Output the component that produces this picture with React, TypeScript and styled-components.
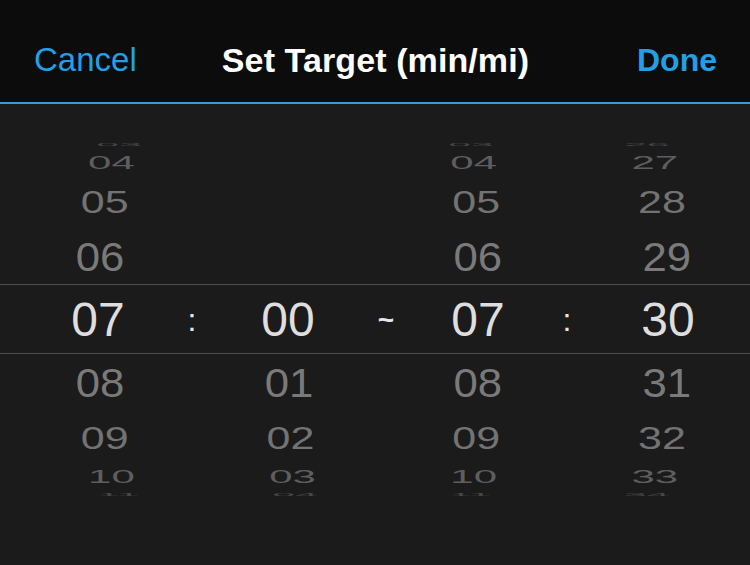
import React, { FC } from 'react'
import styled, { createGlobalStyle } from 'styled-components'

const GlobalStyle = createGlobalStyle`
  html, body {
    margin: 0;
    padding: 0;
    background-color: #1b1b1b;
  }
`

const Screen = styled.div`
  width: 750px;
  height: 565px;
  display: flex;
  flex-direction: column;
  background-color: #1b1b1b;
  overflow: hidden;
  font-family: 'Liberation Sans', Arial, sans-serif;
`

const Header = styled.header`
  height: 84px;
  padding: 18px 33px 0 34px;
  display: grid;
  grid-template-columns: 1fr auto 1fr;
  align-items: center;
  background-color: #0c0c0c;
  border-bottom: 2px solid #3a9bd6;
`

const HeaderButton = styled.span<{ $bold?: boolean; $align: 'left' | 'right' }>`
  color: #22a0e6;
  font-size: ${(p) => (p.$bold ? 32 : 33)}px;
  font-weight: ${(p) => (p.$bold ? 700 : 400)};
  justify-self: ${(p) => (p.$align === 'left' ? 'start' : 'end')};
  cursor: pointer;
`

const Title = styled.h1`
  margin: 0;
  color: #ffffff;
  font-size: 34px;
  font-weight: 700;
  letter-spacing: 0.1px;
`

const Wheel = styled.div`
  position: relative;
  height: 432px;
  display: grid;
  grid-template-columns: 38px 120px 68px 124px 72px 112px 66px 136px 14px;
`

const Band = styled.div`
  position: absolute;
  left: 0;
  right: 0;
  top: 180px;
  height: 68px;
  border-top: 1px solid #4d4d4d;
  border-bottom: 1px solid #4d4d4d;
  pointer-events: none;
`

const Column = styled.div`
  display: flex;
  flex-direction: column;
  justify-content: center;
  align-items: center;
`

const Item = styled.div<{ $selected?: boolean }>`
  display: flex;
  align-items: center;
  justify-content: center;
  width: 100%;
  white-space: nowrap;
  font-size: ${(p) => (p.$selected ? 48 : 44)}px;
  overflow: visible;
`

const Label = styled.span`
  display: block;
  line-height: 1;
`

const Separator = styled.div<{ $size: number; $bold?: boolean }>`
  display: flex;
  align-items: center;
  justify-content: center;
  color: #e6e6e6;
  font-size: ${(p) => p.$size}px;
  font-weight: ${(p) => (p.$bold ? 700 : 400)};
`

const R = 179
const STEP = 21
const P = 2000
const SCREEN_CENTER = 375

const rad = (d: number) => (d * Math.PI) / 180

const slot = (k: number) => {
  const a = Math.abs(k) * STEP
  const lo = Math.max(-90, a - STEP / 2)
  const hi = Math.min(90, a + STEP / 2)
  const h = k === 0 ? 2 * R * Math.sin(rad(STEP / 2)) : R * (Math.sin(rad(hi)) - Math.sin(rad(lo)))
  const c = Math.cos(rad(a))
  const s = P / (P + R * (1 - c))
  return { h, c, s, a }
}

const fade = ['#dedede', '#7a7a7a', '#737373', '#5e5e5e', '#474747']

const pad = (n: number) => String(n).padStart(2, '0')

const PickerColumn: FC<{ values: number[]; selected: number; center: number }> = ({ values, selected, center }) => {
  const idx = values.indexOf(selected)
  const offsets = [-4, -3, -2, -1, 0, 1, 2, 3, 4]
  return (
    <Column>
      {offsets.map((k) => {
        const v = values[idx + k]
        const { h, c, s } = slot(k)
        const dx = (SCREEN_CENTER - center) * (1 - s)
        return (
          <Item key={k} $selected={k === 0} style={{ height: h, color: fade[Math.abs(k)] }}>
            {v !== undefined && (
              <Label style={{ transform: `translateX(${dx}px) scale(${s}, ${s * c})` }}>{pad(v)}</Label>
            )}
          </Item>
        )
      })}
    </Column>
  )
}

const range = (from: number, to: number) => Array.from({ length: to - from + 1 }, (_, i) => from + i)

const App: FC = () => {
  return (
    <Screen>
      <GlobalStyle />
      <Header>
        <HeaderButton $align="left">Cancel</HeaderButton>
        <Title>Set Target (min/mi)</Title>
        <HeaderButton $align="right" $bold>
          Done
        </HeaderButton>
      </Header>
      <Wheel>
        <Band />
        <div />
        <PickerColumn values={range(0, 30)} selected={7} center={98} />
        <Separator $size={32}>:</Separator>
        <PickerColumn values={range(0, 59)} selected={0} center={288} />
        <Separator $size={28} $bold>~</Separator>
        <PickerColumn values={range(0, 30)} selected={7} center={478} />
        <Separator $size={32}>:</Separator>
        <PickerColumn values={range(0, 59)} selected={30} center={668} />
        <div />
      </Wheel>
    </Screen>
  )
}

export default App
